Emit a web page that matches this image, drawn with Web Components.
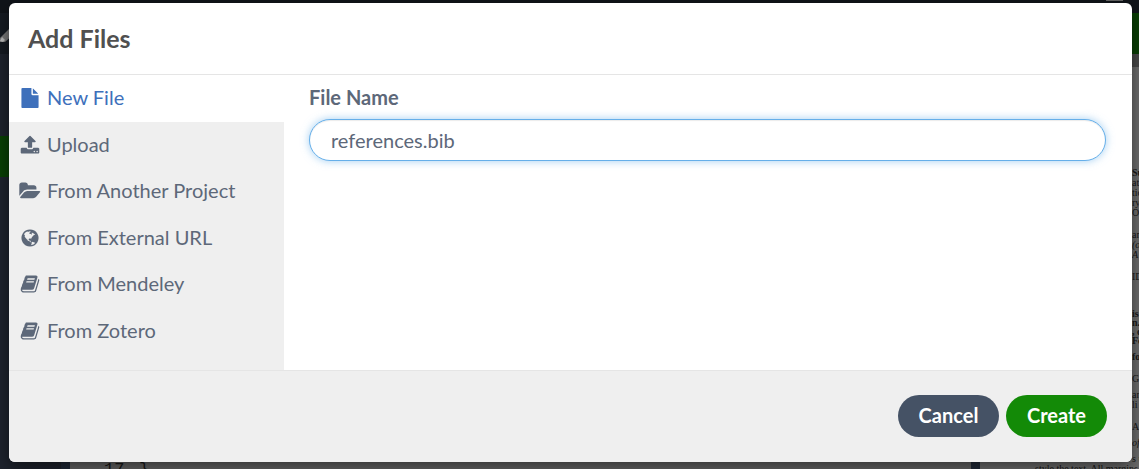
<!DOCTYPE html>
<html lang="en">
<head>
<meta charset="utf-8">
<title>Add Files</title>
<style>
html,body{margin:0;height:100%}
body{font-family:Lato,sans-serif;font-size:20px;line-height:30px;color:#5d6879;overflow:hidden;position:relative;background:#4e4e4e}
add-files-dialog{position:absolute;top:3px;left:9px;right:7px}
</style>
</head>
<body>
<editor-backdrop></editor-backdrop>
<add-files-dialog>
  <span slot="title">Add Files</span>
  <source-tab slot="tabs" icon="file" active>New File</source-tab>
  <source-tab slot="tabs" icon="upload">Upload</source-tab>
  <source-tab slot="tabs" icon="folder">From Another Project</source-tab>
  <source-tab slot="tabs" icon="globe">From External URL</source-tab>
  <source-tab slot="tabs" icon="book">From Mendeley</source-tab>
  <source-tab slot="tabs" icon="book">From Zotero</source-tab>
  <file-name-field value="references.bib">File Name</file-name-field>
  <pill-button slot="actions">Cancel</pill-button>
  <pill-button slot="actions" primary>Create</pill-button>
</add-files-dialog>
<script>
const ICONS = {
  file: ['0 0 1792 1792', 'M1152 512v-472q22 14 36 28l408 408q14 14 28 36h-472zm-128 32q0 40 28 68t68 28h544v1056q0 40-28 68t-68 28h-1344q-40 0-68-28t-28-68v-1600q0-40 28-68t68-28h800v544z'],
  upload: ['0 0 1792 1792', 'M1344 1472q0-26-19-45t-45-19-45 19-19 45 19 45 45 19 45-19 19-45zm256 0q0-26-19-45t-45-19-45 19-19 45 19 45 45 19 45-19 19-45zm128-224v320q0 40-28 68t-68 28h-1472q-40 0-68-28t-28-68v-320q0-40 28-68t68-28h427q21 56 70.5 92t110.5 36h256q61 0 110.5-36t70.5-92h427q40 0 68 28t28 68zm-325-648q-17 40-59 40h-256v448q0 26-19 45t-45 19h-256q-26 0-45-19t-19-45v-448h-256q-42 0-59-40-17-39 14-69l448-448q18-19 45-19t45 19l448 448q31 30 14 69z'],
  folder: ['128 0 1792 1792', 'M1943 952q0 31-31 66l-336 396q-43 51-120.5 86.5t-143.5 35.5h-1088q-34 0-60.5-13t-26.5-43q0-31 31-66l336-396q43-51 120.5-86.5t143.5-35.5h1088q34 0 60.5 13t26.5 43zm-343-344v160h-832q-94 0-197 47.5t-164 119.5l-337 396-5 6q0-4-.5-12.5t-.5-12.5v-960q0-92 66-158t158-66h320q92 0 158 66t66 158v32h544q92 0 158 66t66 158z'],
  globe: ['0 0 1792 1792', 'M896 128q209 0 385.5 103t279.5 279.5 103 385.5-103 385.5-279.5 279.5-385.5 103-385.5-103-279.5-279.5-103-385.5 103-385.5 279.5-279.5 385.5-103zm274 521q-2 1-9.5 9.5t-13.5 9.5q2 0 4.5-5t5-11 3.5-7q6-7 22-15 14-6 52-12 34-8 51 11-2-2 9.5-13t14.5-12q3-2 15-4.5t15-7.5l2-22q-12 1-17.5-7t-6.5-21q0 2-6 8 0-7-4.5-8t-11.5 1-9 1q-10-3-15-7.5t-8-16.5-4-15q-2-5-9.5-11t-9.5-10q-1-2-2.5-5.5t-3-6.5-4-5.5-5.5-2.5-7 5-7.5 10-4.5 5q-3-2-6-1.5t-4.5 1-4.5 3-5 3.5q-3 2-8.5 3t-8.5 2q15-5-1-11-10-4-16-3 9-4 7.5-12t-8.5-14h5q-1-4-8.5-8.5t-17.5-8.5-13-6q-8-5-34-9.5t-33-.5q-5 6-4.5 10.5t4 14 3.5 12.5q1 6-5.5 13t-6.5 12q0 7 14 15.5t10 21.5q-3 8-16 16t-16 12q-5 8-1.5 18.5t10.5 16.5q2 2 1.5 4t-3.5 4.5-5.5 4-6.5 3.5l-3 2q-11 5-20.5-6t-13.5-26q-7-25-16-30-23-8-29 1-5-13-41-26-25-9-58-4 6-1 0-15-7-15-19-12 3-6 4-17.5t1-13.5q3-13 12-23 1-1 7-8.5t9.5-13.5.5-6q35 4 50-11 5-5 11.5-17t10.5-17q9-6 14-5.5t14.5 5.5 14.5 5q14 1 15.5-11t-7.5-20q12 1 3-17-4-7-8-9-12-4-27 5-8 4 2 8-1-1-9.5 10.5t-16.5 17.5-16-5q-1-1-5.5-13.5t-9.5-13.5q-8 0-16 15 3-8-11-15t-24-8q19-12-8-27-7-4-20.5-5t-19.5 4q-5 7-5.5 11.5t5 8 10.5 5.5 11.5 4 8.5 3q14 10 8 14-2 1-8.5 3.5t-11.5 4.5-6 4q-3 4 0 14t-2 14q-5-5-9-17.5t-7-16.5q7 9-25 6l-10-1q-4 0-16 2t-20.5 1-13.5-8q-4-8 0-20 1-4 4-2-4-3-11-9.5t-10-8.5q-46 15-94 41 6 1 12-1 5-2 13-6.5t10-5.5q34-14 42-7l5-5q14 16 20 25-7-4-30-1-20 6-22 12 7 12 5 18-4-3-11.5-10t-14.5-11-15-5q-16 0-22 1-146 80-235 222 7 7 12 8 4 1 5 9t2.5 11 11.5-3q9 8 3 19 1-1 44 27 19 17 21 21 3 11-10 18-1-2-9-9t-9-4q-3 5 .5 18.5t10.5 12.5q-7 0-9.5 16t-2.5 35.5-1 23.5l2 1q-3 12 5.5 34.5t21.5 19.5q-13 3 20 43 6 8 8 9 3 2 12 7.5t15 10 10 10.5q4 5 10 22.5t14 23.5q-2 6 9.5 20t10.5 23q-1 0-2.5 1t-2.5 1q3 7 15.5 14t15.5 13q1 3 2 10t3 11 8 2q2-20-24-62-15-25-17-29-3-5-5.5-15.5t-4.5-14.5q2 0 6 1.5t8.5 3.5 7.5 4 2 3q-3 7 2 17.5t12 18.5 17 19 12 13q6 6 14 19.5t0 13.5q9 0 20 10t17 20q5 8 8 26t5 24q2 7 8.5 13.5t12.5 9.5l16 8 13 7q5 2 18.5 10.5t21.5 11.5q10 4 16 4t14.5-2.5 13.5-3.5q15-2 29 15t21 21q36 19 55 11-2 1 .5 7.5t8 15.5 9 14.5 5.5 8.5q5 6 18 15t18 15q6-4 7-9-3 8 7 20t18 10q14-3 14-32-31 15-49-18 0-1-2.5-5.5t-4-8.5-2.5-8.5 0-7.5 5-3q9 0 10-3.5t-2-12.5-4-13q-1-8-11-20t-12-15q-5 9-16 8t-16-9q0 1-1.5 5.5t-1.5 6.5q-13 0-15-1 1-3 2.5-17.5t3.5-22.5q1-4 5.5-12t7.5-14.5 4-12.5-4.5-9.5-17.5-2.5q-19 1-26 20-1 3-3 10.5t-5 11.5-9 7q-7 3-24 2t-24-5q-13-8-22.5-29t-9.5-37q0-10 2.5-26.5t3-25-5.5-24.5q3-2 9-9.5t10-10.5q2-1 4.5-1.5t4.5 0 4-1.5 3-6q-1-1-4-3-3-3-4-3 7 3 28.5-1.5t27.5 1.5q15 11 22-2 0-1-2.5-9.5t-.5-13.5q5 27 29 9 3 3 15.5 5t17.5 5q3 2 7 5.5t5.5 4.5 5-.5 8.5-6.5q10 14 12 24 11 40 19 44 7 3 11 2t4.5-9.5 0-14-1.5-12.5l-1-8v-18l-1-8q-15-3-18.5-12t1.5-18.5 15-18.5q1-1 8-3.5t15.5-6.5 12.5-8q21-19 15-35 7 0 11-9-1 0-5-3t-7.5-5-4.5-2q9-5 2-16 5-3 7.5-11t7.5-10q9 12 21 2 7-8 1-16 5-7 20.5-10.5t18.5-9.5q7 2 8-2t1-12 3-12q4-5 15-9t13-5l17-11q3-4 0-4 18 2 31-11 10-11-6-20 3-6-3-9.5t-15-5.5q3-1 11.5-.5t10.5-1.5q15-10-7-16-17-5-43 12zm-163 877q206-36 351-189-3-3-12.5-4.5t-12.5-3.5q-18-7-24-8 1-7-2.5-13t-8-9-12.5-8-11-7q-2-2-7-6t-7-5.5-7.5-4.5-8.5-2-10 1l-3 1q-3 1-5.5 2.5t-5.5 3-4 3 0 2.5q-21-17-36-22-5-1-11-5.5t-10.5-7-10-1.5-11.5 7q-5 5-6 15t-2 13q-7-5 0-17.5t2-18.5q-3-6-10.5-4.5t-12 4.5-11.5 8.5-9 6.5-8.5 5.5-8.5 7.5q-3 4-6 12t-5 11q-2-4-11.5-6.5t-9.5-5.5q2 10 4 35t5 38q7 31-12 48-27 25-29 40-4 22 12 26 0 7-8 20.5t-7 21.5q0 6 2 16z'],
  book: ['0 0 1792 1792', 'M1703 478q40 57 18 129l-275 906q-19 64-76.5 107.5t-122.5 43.5h-923q-77 0-148.5-53.5t-99.5-131.5q-24-67-2-127 0-4 3-27t4-37q1-8-3-21.5t-3-19.5q2-11 8-21t16.5-23.5 16.5-23.5q23-38 45-91.5t30-91.5q3-10 .5-30t-.5-28q3-11 17-28t17-23q21-36 42-92t25-90q1-9-2.5-32t.5-28q4-13 22-30.5t22-22.5q19-26 42.5-84.5t27.5-96.5q1-8-3-25.5t-2-26.5q2-8 9-18t18-23 17-21q8-12 16.5-30.5t15-35 16-36 19.5-32 26.5-23.5 36-11.5 47.5 5.5l-1 3q38-9 51-9h761q74 0 114 56t18 130l-274 906q-36 119-71.5 153.5t-128.5 34.5h-869q-27 0-38 15-11 16-1 43 24 70 144 70h923q29 0 56-15.5t35-41.5l300-987q7-22 5-57 38 15 59 43zm-1064 2q-4 13 2 22.5t20 9.5h608q13 0 25.5-9.5t16.5-22.5l21-64q4-13-2-22.5t-20-9.5h-608q-13 0-25.5 9.5t-16.5 22.5zm-83 256q-4 13 2 22.5t20 9.5h608q13 0 25.5-9.5t16.5-22.5l21-64q4-13-2-22.5t-20-9.5h-608q-13 0-25.5 9.5t-16.5 22.5z']
};

class ShadowElement extends HTMLElement {
  connectedCallback() {
    if (!this.shadowRoot) this.attachShadow({ mode: 'open' }).innerHTML = this.render();
  }
}

customElements.define('source-tab', class extends ShadowElement {
  render() {
    const [box, path] = ICONS[this.getAttribute('icon')];
    return `<style>
      :host{display:grid}
      button{all:unset;box-sizing:border-box;display:flex;align-items:center;gap:7px;padding:0 11px;color:inherit;cursor:pointer}
      :host([active]) button{background:#fff;color:#3e70bb}
      svg{width:20px;height:20px;flex:none;fill:currentColor;overflow:visible}
      span{padding-bottom:2px}
    </style><button type="button"><svg viewBox="${box}" aria-hidden="true"><path d="${path}"/></svg><span><slot></slot></span></button>`;
  }
});

customElements.define('file-name-field', class extends ShadowElement {
  render() {
    return `<style>
      :host{display:flex;flex-direction:column;gap:7px}
      label{font-weight:700}
      input{box-sizing:border-box;width:100%;height:42px;margin:0;padding:0 21px;border:1px solid #66afe9;border-radius:21px;outline:0;background:#fff;color:inherit;font:inherit;box-shadow:inset 0 1px 1px rgba(0,0,0,.08),0 0 8px rgba(102,175,233,.6)}
    </style><label for="name"><slot></slot></label><input id="name" type="text" value="${this.getAttribute('value')}">`;
  }
});

customElements.define('pill-button', class extends ShadowElement {
  render() {
    return `<style>
      :host{display:block}
      button{display:block;min-width:101px;height:42px;margin:0;padding:0 18px 2px;border:0;border-radius:21px;background:#455265;color:#fff;font:inherit;font-weight:700;cursor:pointer}
      :host([primary]) button{background:#138a07}
    </style><button type="button"><slot></slot></button>`;
  }
});

customElements.define('add-files-dialog', class extends ShadowElement {
  render() {
    return `<style>
      :host{display:block;border-radius:6px;background:#fff;box-shadow:0 5px 15px rgba(0,0,0,.5);overflow:hidden}
      header{padding:20px 19px 21px;border-bottom:1px solid #e5e5e5}
      h2{margin:0;font-size:25px;line-height:30px;color:#505050}
      main{display:grid;grid-template-columns:275px 1fr}
      nav{background:#efefef;display:grid;grid-auto-rows:1fr;min-height:279px;padding-bottom:16px}
      section{padding:7px 26px 7px 25px}
      footer{display:flex;justify-content:flex-end;gap:7px;padding:24px 25px 25px;border-top:1px solid #e5e5e5;background:#efefef}
    </style>
    <header><h2><slot name="title"></slot></h2></header>
    <main><nav><slot name="tabs"></slot></nav><section><slot></slot></section></main>
    <footer><slot name="actions"></slot></footer>`;
  }
});

customElements.define('editor-backdrop', class extends ShadowElement {
  render() {
    return `<style>
      :host{display:grid;grid-template-rows:13px 41px 1fr;height:100%;overflow:hidden;font-family:"Liberation Serif",serif;font-size:10px;line-height:10px;color:#161616}
      .top{background:#101419;display:flex;justify-content:flex-end;padding-right:16px}
      .top i{width:17px;height:1px;background:#666}
      .bar{display:flex;justify-content:space-between;background:#161b22}
      .bar svg{width:16px;height:41px}
      .bar b{width:22px;background:#093f04}
      .work{display:grid;grid-template-columns:61px 9px minmax(0,1fr) 9px 159px;min-height:0}
      .tree{background:#1e232d;padding-top:82px}
      .tree b{display:block;height:41px;background:#093f04}
      .split{background:#202938}
      .code{background:#646464;display:flex;align-items:flex-end;font:17px/17px "Liberation Mono",monospace;color:#171717;overflow:hidden}
      .code div{height:8px;overflow:visible}
      .code .num{width:69px;box-sizing:border-box;padding-left:34px}
      .pdf{background:linear-gradient(#484848 13px,#6c6c6c 13px);display:flex;flex-direction:column;padding-top:114px;overflow:hidden;white-space:nowrap}
      p{flex:none;margin:0 0 12px 152px}
      .tight{line-height:9px;font-weight:700;margin-bottom:7px}
      .near{margin-bottom:6px}
      .far{margin-bottom:27px}
      .end{margin-bottom:0}
      .last{margin-left:55px}
    </style>
    <div class="top"><i></i></div>
    <div class="bar"><svg viewBox="0 0 16 41" aria-hidden="true"><path d="M0 25L9 16l5 5-9 8H0z" fill="#777"/><path d="M0 28l2-4 3 3-2 2z" fill="#bbb"/></svg><b></b></div>
    <div class="work">
      <div class="tree"><b></b></div><div class="split"></div>
      <div class="code"><div class="num">17</div><div>}</div></div>
      <div class="split"></div>
      <div class="pdf">
        <p><b>Su</b><br>atio<br>tion<br>ry<br>O</p>
        <p>am<br><i>(of</i><br><i>A</i></p>
        <p class="far">ID</p>
        <p class="tight">is<br>n.e<br>, c<br>Fe</p>
        <p><b>for</b></p><p class="near">GR</p>
        <p>an<br>li</p><p class="near">ASI</p>
        <p class="near"><i>of</i></p><p class="end">s u</p>
        <p class="last">style the text. All margins, column widths</p>
      </div>
    </div>`;
  }
});
</script>
</body>
</html>
